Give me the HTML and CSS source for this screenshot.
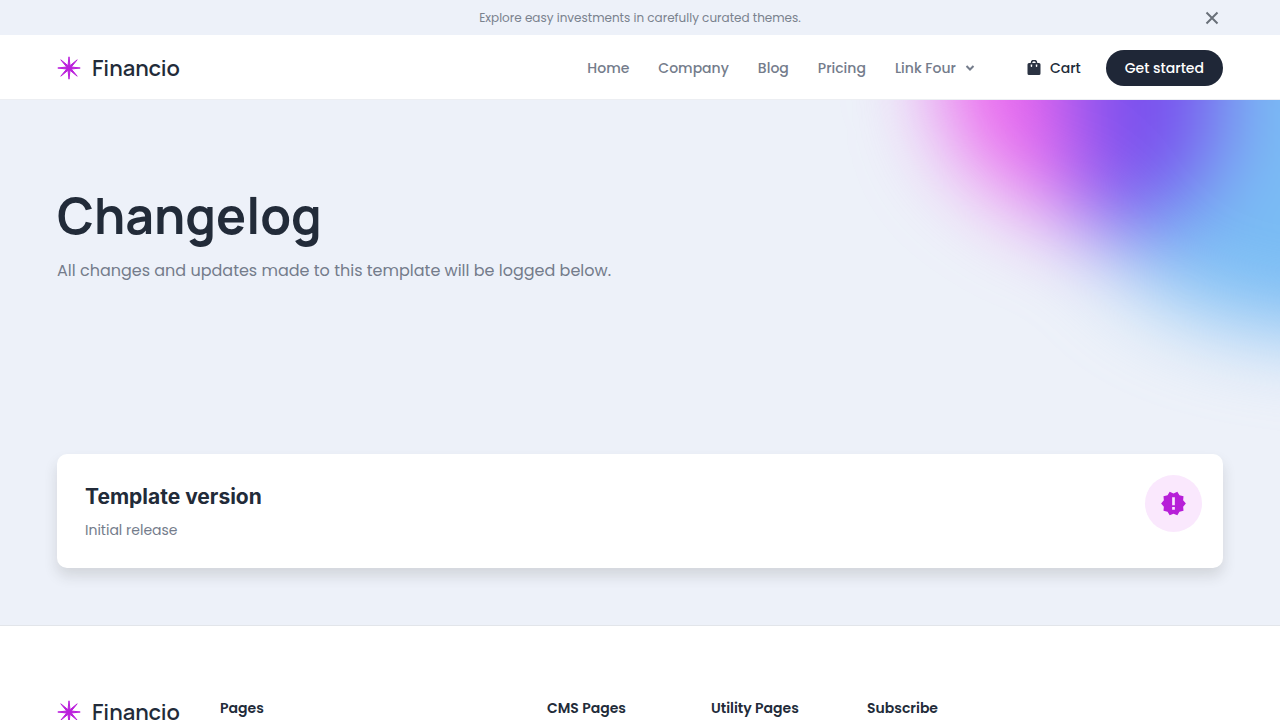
FILE: index.html
```html
<!DOCTYPE html>
<html lang="en">
<head>
  <meta charset="UTF-8">
  <meta name="viewport" content="width=device-width, initial-scale=1.0">
  <title>Changelog - Financio</title>
  <link rel="stylesheet" href="styles.css">
</head>
<body>
  <svg class="sprite" aria-hidden="true">
    <symbol id="logo-star" viewBox="0 0 24 24">
      <path d="M12 .8l1 8.900 7.200-5.900-5.900 7.200 8.900 1-8.900 1 5.900 7.200-7.200-5.900-1 8.900-1-8.900-7.200 5.900 5.900-7.200-8.900-1 8.900-1-5.900-7.200 7.200 5.900z" stroke="currentColor" stroke-width="1" stroke-linejoin="round"/>
    </symbol>
  </svg>

  <div class="banner">
    <p class="banner-text">Explore easy investments in carefully curated themes.</p>
    <button class="banner-close" type="button" aria-label="Close">
      <svg width="14" height="14" viewBox="0 0 14 14"><path d="M1.500 1.500l11 11M12.500 1.500l-11 11"/></svg>
    </button>
  </div>

  <header class="navbar">
    <a class="brand" href="#">
      <svg class="brand-icon"><use href="#logo-star"/></svg>
      <span>Financio</span>
    </a>
    <nav class="nav-links">
      <a href="#">Home</a>
      <a href="#">Company</a>
      <a href="#">Blog</a>
      <a href="#">Pricing</a>
      <button class="nav-dropdown" type="button">
        Link Four
        <svg width="10" height="10" viewBox="0 0 10 10"><path d="M1.500 3L5 6.500 8.500 3"/></svg>
      </button>
    </nav>
    <a class="cart" href="#">
      <svg width="14" height="16" viewBox="0 0 14 16">
        <path fill-rule="evenodd" d="M2 3h1.700a3.300 3.300 0 0 1 6.600 0H12a1.500 1.500 0 0 1 1.500 1.500v9A1.500 1.500 0 0 1 12 15H2a1.500 1.500 0 0 1-1.500-1.500v-9A1.500 1.500 0 0 1 2 3zm3.200 0h3.600a1.800 1.800 0 0 0-3.600 0zM3.700 4.500v1.700a.75.75 0 0 0 1.500 0V4.500zm5.100 0v1.700a.75.75 0 0 0 1.500 0V4.500z"/>
      </svg>
      Cart
    </a>
    <a class="btn" href="#">Get started</a>
  </header>

  <main class="page">
    <svg class="glow" viewBox="0 0 440 340" aria-hidden="true">
      <defs>
        <filter id="soft" x="-50%" y="-50%" width="200%" height="200%" color-interpolation-filters="sRGB">
          <feGaussianBlur stdDeviation="42"/>
        </filter>
      </defs>
      <g filter="url(#soft)">
        <path fill="#ea68ee" d="M100-150V0c5 55 55 92 140 130L232 0v-150z"/>
        <path fill="#7a50ee" d="M230-150V0l16 128 50 22L380 60v-210z"/>
        <path fill="#7abcf4" d="M378-150V60L300 128l-36 12c50 68 120 98 330 98v-390z"/>
      </g>
    </svg>

    <section class="hero">
      <h1>Changelog</h1>
      <p>All changes and updates made to this template will be logged below.</p>
    </section>

    <article class="release">
      <div>
        <h2>Template version</h2>
        <p>Initial release</p>
      </div>
      <div class="release-badge">
        <svg width="27" height="27" viewBox="0 0 24 24">
          <path fill-rule="evenodd" d="M23 12l-2.440-2.780.34-3.680-3.610-.82-1.890-3.180L12 3 8.600 1.540 6.710 4.720l-3.610.81.34 3.680L1 12l2.440 2.780-.34 3.690 3.610.82 1.890 3.180L12 21l3.400 1.460 1.890-3.180 3.610-.82-.34-3.680L23 12zm-9.800 5.500h-2.400v-2.400h2.400v2.400zm0-4h-2.400v-7h2.400v7z"/>
        </svg>
      </div>
    </article>
  </main>

  <footer class="footer">
    <a class="brand" href="#">
      <svg class="brand-icon"><use href="#logo-star"/></svg>
      <span>Financio</span>
    </a>
    <h3>Pages</h3>
    <h3>CMS Pages</h3>
    <h3>Utility Pages</h3>
    <h3>Subscribe</h3>
  </footer>
</body>
</html>
```
FILE: styles.css
```css
* {
  margin: 0;
  padding: 0;
  box-sizing: border-box;
}

body {
  font-family: Poppins, Inter, sans-serif;
  font-size: 14px;
  line-height: 24px;
  color: #222b39;
  background: #fff;
}

a {
  color: inherit;
  text-decoration: none;
}

button {
  font: inherit;
  color: inherit;
  background: none;
  border: none;
  cursor: pointer;
}

.sprite {
  display: block;
  width: 0;
  height: 0;
}

/* Banner */
.banner {
  display: grid;
  grid-template-columns: 1fr auto 1fr;
  align-items: center;
  height: 35px;
  padding: 0 57px;
  background: #edf1f9;
}

.banner-text {
  grid-column: 2;
  font-size: 12px;
  color: #7a828e;
}

.banner-close {
  justify-self: end;
  display: flex;
  padding: 4px;
}

.banner-close svg {
  fill: none;
  stroke: #697079;
  stroke-width: 2;
}

/* Navbar */
.navbar {
  display: flex;
  align-items: center;
  height: 65px;
  padding: 1px 57px 0;
  border-bottom: 1px solid #eceef2;
  background: #fff;
}

.brand {
  display: flex;
  align-items: center;
  gap: 11px;
  font-family: Manrope, Inter, sans-serif;
  font-size: 22px;
  font-weight: 600;
}

.brand-icon {
  width: 24px;
  height: 24px;
  color: #bb20dc;
  fill: currentColor;
}

.nav-links {
  display: flex;
  gap: 29px;
  margin-left: auto;
  font-weight: 500;
  color: #747c8b;
}

.nav-dropdown {
  display: flex;
  align-items: center;
  gap: 9px;
}

.nav-dropdown svg {
  fill: none;
  stroke: currentColor;
  stroke-width: 2;
}

.cart {
  display: flex;
  align-items: center;
  gap: 9px;
  margin: 0 25px 0 52px;
  font-weight: 500;
}

.cart svg {
  fill: #2b3342;
}

.btn {
  padding: 6px 19px;
  border-radius: 18px;
  font-weight: 500;
  color: #fff;
  background: #1f2737;
}

/* Page */
.page {
  position: relative;
  overflow: hidden;
  padding: 83px 57px 57px;
  border-bottom: 1px solid #e2e5ea;
  background: #edf1f9;
}

.glow {
  position: absolute;
  top: 0;
  right: 0;
  width: 440px;
  height: 340px;
  overflow: visible;
}

.hero {
  position: relative;
  margin-bottom: 171px;
}

.hero h1 {
  margin-bottom: 11px;
  font-family: Manrope, Inter, sans-serif;
  font-size: 50px;
  font-weight: 700;
  line-height: 65px;
}

.hero p {
  font-size: 16px;
  color: #747c8b;
}

.release {
  position: relative;
  display: flex;
  justify-content: space-between;
  align-items: flex-start;
  padding: 21px 21px 26px 28px;
  border-radius: 10px;
  background: #fff;
  box-shadow: 0 8px 14px rgba(50, 50, 40, 0.14);
}

.release h2 {
  margin: 7px 0 6px;
  font-family: Inter, sans-serif;
  font-size: 21px;
  font-weight: 700;
  line-height: 30px;
}

.release p {
  color: #747c8b;
}

.release-badge {
  display: flex;
  justify-content: center;
  align-items: center;
  width: 57px;
  height: 57px;
  border-radius: 50%;
  background: #fae8fd;
}

.release-badge svg {
  fill: #b71fd8;
}

/* Footer */
.footer {
  display: grid;
  grid-template-columns: 163fr 327fr 164fr 156fr 356fr;
  align-items: start;
  padding: 70px 57px;
}

.footer .brand {
  margin-top: 4px;
}

.footer h3 {
  font-size: 14px;
  font-weight: 600;
}
```
